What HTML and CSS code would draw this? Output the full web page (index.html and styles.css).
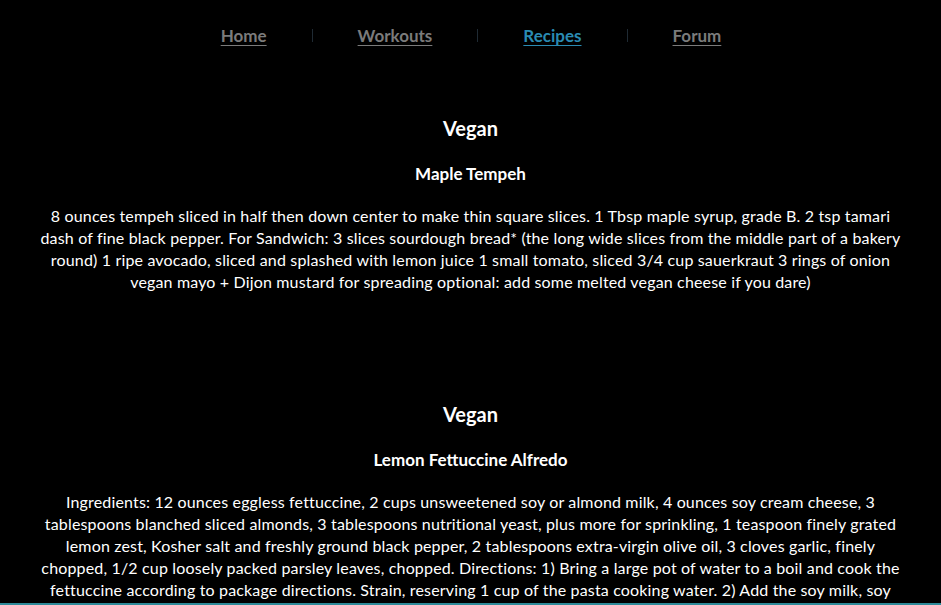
FILE: index.html
```html
<!DOCTYPE html>
<html>
<head>
<meta charset="utf-8">
<link rel="stylesheet" href="styles.css">
</head>
<body>
<nav class="nav">
  <a class="nav-link" href="#">Home</a>
  <span class="sep"></span>
  <a class="nav-link" href="#">Workouts</a>
  <span class="sep"></span>
  <a class="nav-link active" href="#">Recipes</a>
  <span class="sep"></span>
  <a class="nav-link" href="#">Forum</a>
</nav>
<main class="content">
  <section class="recipe">
    <h2 class="category">Vegan</h2>
    <h3 class="title">Maple Tempeh</h3>
    <p class="body">8 ounces tempeh sliced in half then down center to make thin square slices. 1 Tbsp maple syrup, grade B. 2 tsp tamari<br>dash of fine black pepper. For Sandwich: 3 slices sourdough bread* (the long wide slices from the middle part of a bakery<br>round) 1 ripe avocado, sliced and splashed with lemon juice 1 small tomato, sliced 3/4 cup sauerkraut 3 rings of onion<br>vegan mayo + Dijon mustard for spreading optional: add some melted vegan cheese if you dare)</p>
  </section>
  <section class="recipe">
    <h2 class="category">Vegan</h2>
    <h3 class="title">Lemon Fettuccine Alfredo</h3>
    <p class="body">Ingredients: 12 ounces eggless fettuccine, 2 cups unsweetened soy or almond milk, 4 ounces soy cream cheese, 3<br>tablespoons blanched sliced almonds, 3 tablespoons nutritional yeast, plus more for sprinkling, 1 teaspoon finely grated<br>lemon zest, Kosher salt and freshly ground black pepper, 2 tablespoons extra-virgin olive oil, 3 cloves garlic, finely<br>chopped, 1/2 cup loosely packed parsley leaves, chopped. Directions: 1) Bring a large pot of water to a boil and cook the<br>fettuccine according to package directions. Strain, reserving 1 cup of the pasta cooking water. 2) Add the soy milk, soy</p>
  </section>
</main>
<div class="bottom-line"></div>
</body>
</html>
```

FILE: styles.css
```css
html, body {
  margin: 0;
  padding: 0;
  background: #000;
}
body {
  font-family: Lato, "Open Sans", sans-serif;
  color: #fff;
  height: 605px;
  overflow: hidden;
}
.nav {
  display: flex;
  justify-content: center;
  align-items: center;
  gap: 45px;
  padding-top: 23px;
  height: 24px;
  padding-left: 1px;
}
.nav-link {
  color: #7b7b7b;
  font-size: 17px;
  font-weight: 700;
  text-decoration: underline;
  text-underline-offset: 3px;
  text-decoration-thickness: 1px;
}
.nav-link.active {
  color: #2a8bb3;
}
.sep {
  width: 1px;
  height: 13px;
  background: #1f2a33;
}
.content {
  padding: 68px 20px 0 20px;
}
.recipe {
  text-align: center;
  height: 286px;
}
.category {
  margin: 0;
  font-size: 20px;
  font-weight: 700;
  line-height: 26px;
  height: 26px;
}
.title {
  margin: 22px 0 0 0;
  font-size: 17px;
  font-weight: 700;
  line-height: 22px;
}
.body {
  margin: 20px 0 0 0;
  font-size: 16px;
  line-height: 22px;
  letter-spacing: 0.16px;
  white-space: nowrap;
}
.bottom-line {
  position: fixed;
  left: 0;
  right: 0;
  bottom: 0;
  height: 2px;
  background: #2d8a99;
}
```
